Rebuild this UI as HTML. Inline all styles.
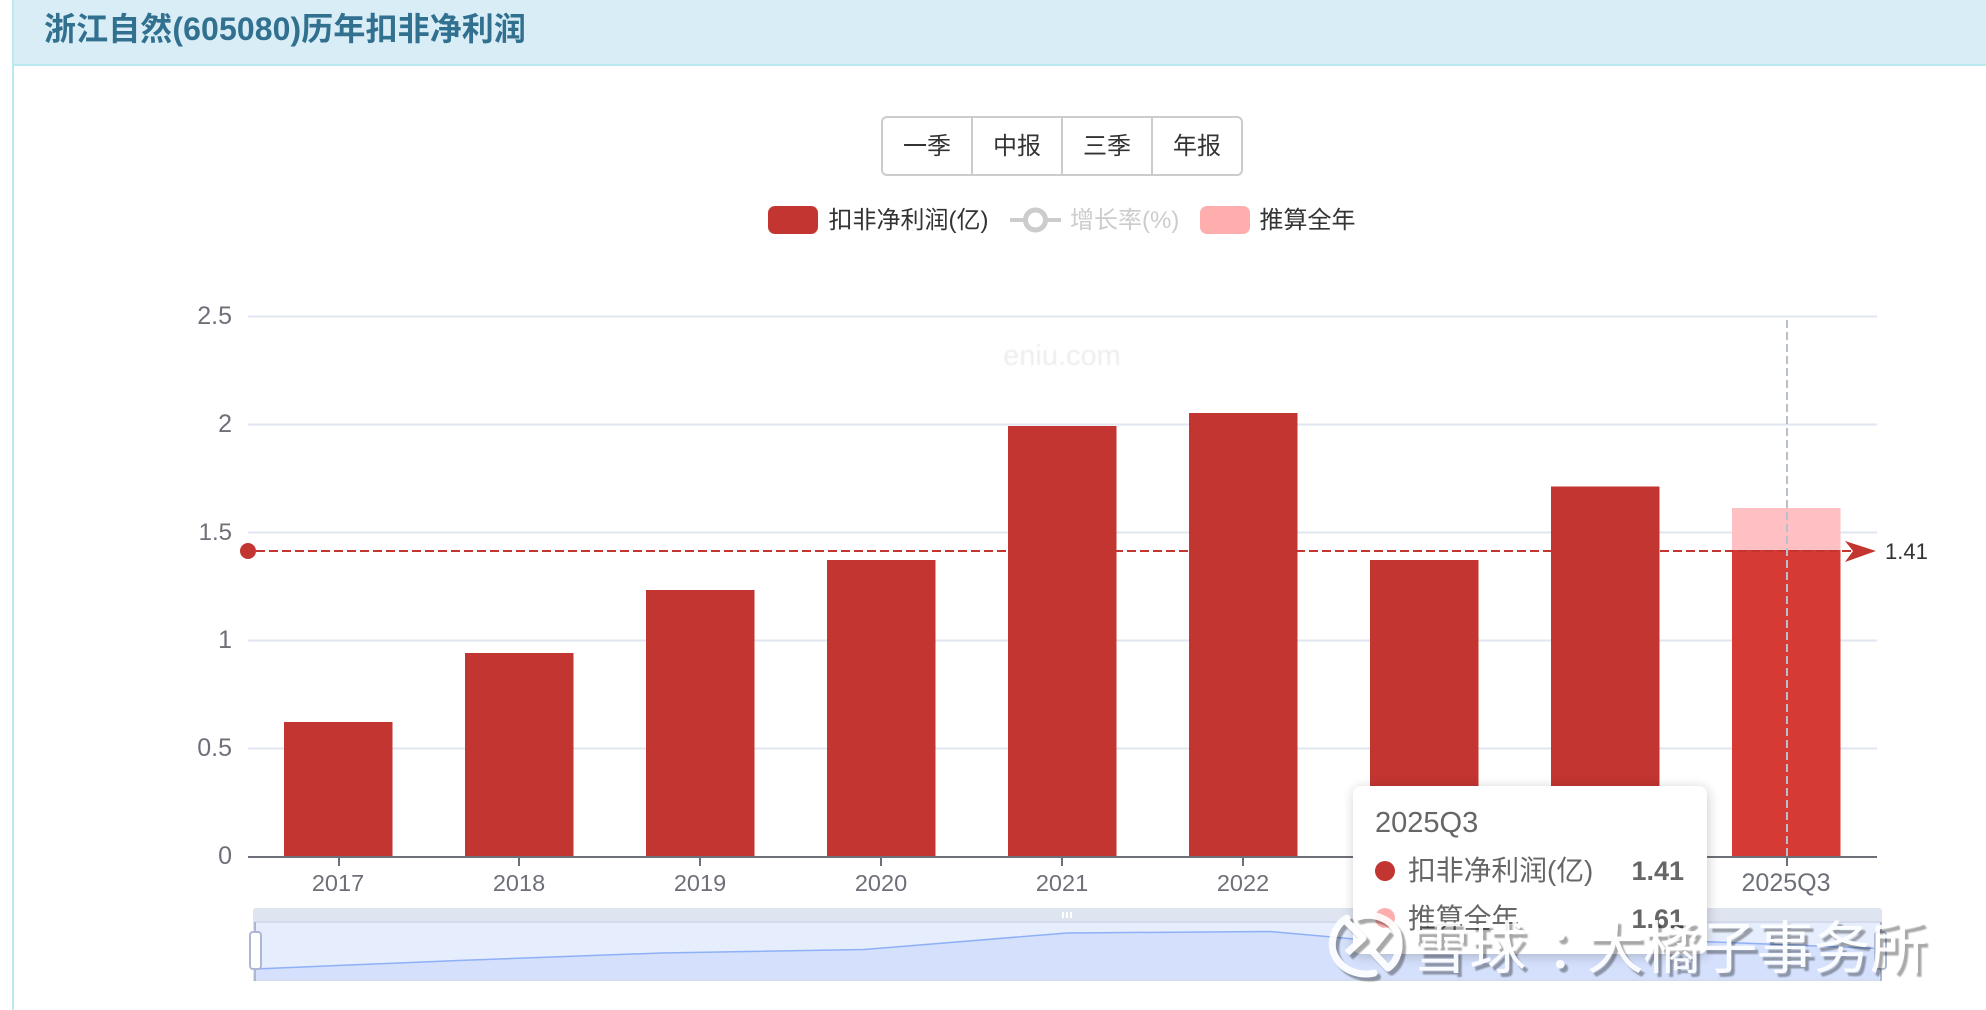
<!DOCTYPE html>
<html lang="zh">
<head>
<meta charset="utf-8">
<title>浙江自然(605080)历年扣非净利润</title>
<style>
html,body{margin:0;padding:0;background:#fff;width:1986px;height:1010px;overflow:hidden;font-family:"Liberation Sans","Noto Sans CJK SC",sans-serif;}
.abs{position:absolute;white-space:nowrap;}
#left{left:12px;top:0;width:2px;height:1010px;background:#bce8f1;}
#head{left:14px;top:0;right:0;height:64px;background:#d9edf7;border-bottom:2px solid #bce8f1;}
#title{left:44px;top:10px;font-size:32px;line-height:38px;font-weight:bold;color:#31708f;letter-spacing:.1px;}
#btns{left:881px;top:116px;width:362px;height:60px;box-sizing:border-box;border:2px solid #ccc;border-radius:6px;display:flex;background:#fff;}
#btns div{flex:1;text-align:center;line-height:58px;height:56px;font-size:24px;color:#333;border-left:2px solid #ccc;}
#btns div:first-child{border-left:none;}
#chart{left:0;top:0;}
#tip{left:1353px;top:786px;width:354px;height:168px;background:#fff;border-radius:8px;box-shadow:1px 2px 12px rgba(0,0,0,.2);color:#666;}
#tip .t{position:absolute;white-space:nowrap;}
#wm{left:0;top:0;}
</style>
</head>
<body>
<div class="abs" id="left"></div>
<div class="abs" id="head"></div>
<div class="abs" id="title">浙江自然(605080)历年扣非净利润</div>
<div class="abs" id="btns"><div>一季</div><div>中报</div><div>三季</div><div>年报</div></div>

<svg class="abs" id="chart" width="1986" height="1010" viewBox="0 0 1986 1010" font-family='"Liberation Sans","Noto Sans CJK SC",sans-serif'>
  <defs><filter id="bl" x="-5%" y="-20%" width="110%" height="140%"><feGaussianBlur stdDeviation=".6"/></filter></defs>
  <!-- legend -->
  <rect x="768" y="206" width="50" height="28" rx="7" fill="#c23531"/>
  <text x="828.500" y="228" font-size="24" fill="#333">扣非净利润(亿)</text>
  <line x1="1010" y1="220" x2="1061" y2="220" stroke="#ccc" stroke-width="4"/>
  <circle cx="1035.500" cy="220" r="10" fill="#fff" stroke="#ccc" stroke-width="5"/>
  <text x="1070" y="228" font-size="24" fill="#ccc">增长率(%)</text>
  <rect x="1200" y="206" width="50" height="28" rx="7" fill="#ffaeae"/>
  <text x="1259.500" y="228" font-size="24" fill="#333">推算全年</text>

  <text x="1062" y="365" font-size="29" fill="#eeeeee" text-anchor="middle" filter="url(#bl)">eniu.com</text>

  <!-- grid -->
  <g stroke="#e0e6f1" stroke-width="2">
    <line x1="248" y1="316.500" x2="1877" y2="316.500"/>
    <line x1="248" y1="424.500" x2="1877" y2="424.500"/>
    <line x1="248" y1="532.500" x2="1877" y2="532.500"/>
    <line x1="248" y1="640.500" x2="1877" y2="640.500"/>
    <line x1="248" y1="748.500" x2="1877" y2="748.500"/>
  </g>
  <!-- y labels -->
  <g font-size="25" fill="#6e7079" text-anchor="end">
    <text x="232" y="324">2.5</text>
    <text x="232" y="432">2</text>
    <text x="232" y="540" font-size="24">1.5</text>
    <text x="232" y="648">1</text>
    <text x="232" y="756">0.5</text>
    <text x="232" y="864">0</text>
  </g>
  <!-- bars -->
  <g fill="#c23531">
    <rect x="284" y="722" width="108.500" height="134"/>
    <rect x="465" y="653" width="108.500" height="203"/>
    <rect x="646" y="590" width="108.500" height="266"/>
    <rect x="827" y="560" width="108.500" height="296"/>
    <rect x="1008" y="426" width="108.500" height="430"/>
    <rect x="1189" y="413" width="108.500" height="443"/>
    <rect x="1370" y="560" width="108.500" height="296"/>
    <rect x="1551" y="486.500" width="108.500" height="369.500"/>
  </g>
  <rect x="1732" y="508" width="108.500" height="42" fill="#ffc0c3"/>
  <rect x="1732" y="550" width="108.500" height="306" fill="#d53a35"/>
  <!-- axis -->
  <line x1="248" y1="857" x2="1877" y2="857" stroke="#6e7079" stroke-width="2"/>
  <g stroke="#6e7079" stroke-width="2">
    <line x1="339" y1="857" x2="339" y2="866"/>
    <line x1="519" y1="857" x2="519" y2="866"/>
    <line x1="700" y1="857" x2="700" y2="866"/>
    <line x1="881" y1="857" x2="881" y2="866"/>
    <line x1="1062" y1="857" x2="1062" y2="866"/>
    <line x1="1243" y1="857" x2="1243" y2="866"/>
    <line x1="1424" y1="857" x2="1424" y2="866"/>
    <line x1="1605" y1="857" x2="1605" y2="866"/>
    <line x1="1787" y1="857" x2="1787" y2="866"/>
  </g>
  <g font-size="23.500" fill="#6e7079" text-anchor="middle">
    <text x="338" y="891">2017</text>
    <text x="519" y="891">2018</text>
    <text x="700" y="891">2019</text>
    <text x="881" y="891">2020</text>
    <text x="1062" y="891">2021</text>
    <text x="1243" y="891">2022</text>
    <text x="1424" y="891">2023</text>
    <text x="1605" y="891">2024</text>
    <text x="1786" y="891" font-size="25">2025Q3</text>
  </g>
  <!-- mark line -->
  <line x1="256" y1="551" x2="1852" y2="551" stroke="#c23531" stroke-width="2" stroke-dasharray="9 4"/>
  <circle cx="248" cy="551" r="8" fill="#c23531"/>
  <path d="M1845 541 L1876 551 L1845 562 L1853 551 Z" fill="#c23531"/>
  <text x="1885" y="559" font-size="22" fill="#333">1.41</text>
  <!-- crosshair -->
  <line x1="1787" y1="320" x2="1787" y2="857" stroke="#b8bfcd" stroke-width="2" stroke-dasharray="8 4"/>

  <!-- data zoom -->
  <path d="M253 981 V911 a3 3 0 0 1 3 -3 H1879 a3 3 0 0 1 3 3 V981 Z" fill="#dfe4f1"/>
  <rect x="255" y="922" width="1626" height="58" fill="#e6eefd"/>
  <rect x="255" y="921" width="1626" height="2" fill="#d3daec"/>
  <path d="M255 969 L458 960.500 L661 953 L864 949.500 L1067 933 L1270 931.500 L1473 949.500 L1676 940.500 L1879 948.500 V980 H255 Z" fill="#d4e0fc"/>
  <path d="M255 969 L458 960.500 L661 953 L864 949.500 L1067 933 L1270 931.500 L1473 949.500 L1676 940.500 L1879 948.500" fill="none" stroke="#8fb0f7" stroke-width="1.500"/>
  <rect x="253" y="979" width="1629" height="2" fill="#d3dcf2"/>
  <line x1="255" y1="922" x2="255" y2="981" stroke="#acb8d1" stroke-width="2"/>
  <line x1="1881" y1="922" x2="1881" y2="981" stroke="#acb8d1" stroke-width="2"/>
  <rect x="250" y="932" width="11" height="37" rx="3" fill="#fff" stroke="#acb8d1" stroke-width="2"/>
  <rect x="1875" y="932" width="11" height="37" rx="3" fill="#fff" stroke="#acb8d1" stroke-width="2"/>
  <g fill="#fff">
    <rect x="1062" y="912" width="2" height="6"/>
    <rect x="1066" y="912" width="2" height="6"/>
    <rect x="1070" y="912" width="2" height="6"/>
  </g>
</svg>

<div class="abs" id="tip">
  <div class="t" style="left:22px;top:20px;font-size:29px;line-height:34px;">2025Q3</div>
  <div class="t" style="left:22px;top:75px;width:20px;height:20px;border-radius:50%;background:#c23531;"></div>
  <div class="t" style="left:55px;top:67px;font-size:27.800px;line-height:36px;">扣非净利润(亿)</div>
  <div class="t" style="right:23px;top:67px;font-size:27px;line-height:36px;font-weight:bold;">1.41</div>
  <div class="t" style="left:22px;top:122px;width:20px;height:20px;border-radius:50%;background:#ffaeae;"></div>
  <div class="t" style="left:55px;top:115px;font-size:27.800px;line-height:36px;">推算全年</div>
  <div class="t" style="right:23px;top:115px;font-size:27px;line-height:36px;font-weight:bold;">1.61</div>
</div>

<svg class="abs" id="wm" width="1986" height="1010" viewBox="0 0 1986 1010" style="pointer-events:none">
  <defs>
    <filter id="sh" x="-10%" y="-20%" width="120%" height="150%">
      <feDropShadow dx="3.500" dy="4" stdDeviation=".9" flood-color="#000" flood-opacity=".38"/>
    </filter>
  </defs>
  <g filter="url(#sh)" opacity=".9">
    <g fill="none" stroke="#fff" stroke-width="7" stroke-linejoin="round">
      <path d="M1347 918 C1333 926 1329 945 1335 956 C1343 972 1362 976 1374 973" stroke-linecap="round"/>
      <path d="M1346 921 L1363 938 L1347 953"/>
      <path d="M1358 917 C1372 912 1390 918 1397 932 C1402 948 1397 962 1388 968" stroke-linecap="round"/>
      <path d="M1388 929 L1371 950 L1388 968"/>
    </g>
    <text y="968" font-size="57" fill="#fff" font-family='"Liberation Sans","Noto Sans CJK SC",sans-serif'><tspan x="1411" letter-spacing="1.500">雪球</tspan><tspan x="1546">：</tspan><tspan x="1587" letter-spacing="-.4">大橘子事务所</tspan></text>
  </g>
</svg>
</body>
</html>
